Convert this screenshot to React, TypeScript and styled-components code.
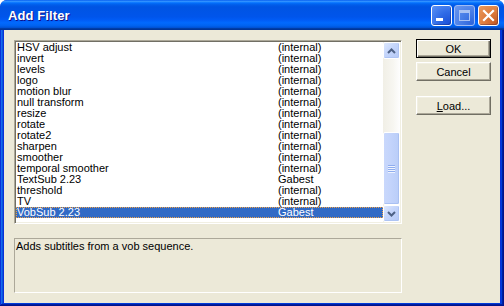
import { createGlobalStyle, styled } from "styled-components"

const GlobalStyle = createGlobalStyle`
  html, body {
    margin: 0;
    padding: 0;
    background: #ffffff;
    overflow: hidden;
  }
  body {
    width: 504px;
    height: 306px;
    font-family: "Liberation Sans", Arial, sans-serif;
  }
`

const Window = styled.div`
  width: 504px;
  height: 306px;
  display: flex;
  flex-direction: column;
  border-radius: 7px 7px 0 0;
  overflow: hidden;
  background: #0831d9;
`

const TitleBar = styled.div`
  height: 30px;
  flex: none;
  display: flex;
  align-items: flex-start;
  justify-content: space-between;
  padding: 0 5px 0 8px;
  box-sizing: border-box;
  background: linear-gradient(
    to bottom,
    #0058ee 0%,
    #3593ff 4%,
    #288eff 6%,
    #127dff 8%,
    #036ffc 10%,
    #0262ee 14%,
    #0057e5 20%,
    #0054e3 24%,
    #0055eb 56%,
    #005bf5 66%,
    #026afe 76%,
    #0062ef 86%,
    #0052d6 92%,
    #0040ab 94%,
    #003092 100%
  );
`

const Title = styled.span`
  margin-top: 8px;
  color: #ffffff;
  font-family: "Liberation Sans", Arial, sans-serif;
  font-weight: bold;
  font-size: 13px;
  line-height: 16px;
  text-shadow: 1px 1px #0f1089;
  letter-spacing: 0.1px;
`

const Controls = styled.div`
  display: flex;
  gap: 2px;
  padding-top: 5px;
`

const CtrlButton = styled.div<{ $kind: "min" | "max" | "close" }>`
  width: 21px;
  height: 21px;
  box-sizing: border-box;
  border-radius: 3px;
  border: 1px solid ${({ $kind }) => ($kind === "max" ? "#9fbcf5" : "#ffffff")};
  margin-left: ${({ $kind }) => ($kind === "close" ? "1px" : "0")};
  display: flex;
  background: ${({ $kind }) =>
    $kind === "close"
      ? "radial-gradient(circle at 90% 90%, #c45a24 0%, #dc7a3c 45%, #eb9a5c 100%)"
      : $kind === "max"
        ? "radial-gradient(circle at 90% 90%, #2f66dc 0%, #4a7fe8 50%, #6d98ee 100%)"
        : "radial-gradient(circle at 90% 90%, #1d52d8 0%, #2f6ae6 45%, #5b92f6 100%)"};
  box-shadow: ${({ $kind }) => ($kind === "max" ? "none" : "inset -1px -1px rgba(0, 0, 60, 0.25)")};

  svg {
    display: block;
  }
`

const ClientFrame = styled.div`
  flex: 1;
  display: flex;
  padding: 0 4px 3px 4px;
  background: #0831d9;
  box-shadow:
    inset -1px -1px #00138c,
    inset 1px 0 #0831d9,
    inset -2px -2px #001ea0,
    inset 2px 0 #166aee,
    inset -3px -3px #003bda,
    inset 3px 0 #0855dd;
`

const Client = styled.div`
  flex: 1;
  display: flex;
  gap: 14px;
  padding: 9px 9px 10px 10px;
  background: #ece9d8;
`

const MainColumn = styled.div`
  width: 388px;
  display: flex;
  flex-direction: column;
  gap: 14px;
  padding-top: 1px;
`

const ListBox = styled.div`
  height: 184px;
  box-sizing: border-box;
  display: flex;
  background: #ffffff;
  border: 1px solid;
  border-color: #aca899 #ffffff #ffffff #aca899;
  padding: 1px;
  box-shadow:
    inset 1px 1px #716f64,
    inset -1px -1px #f1efe2;
`

const Rows = styled.div`
  flex: 1;
  display: flex;
  flex-direction: column;
`

const Row = styled.div<{ $selected?: boolean }>`
  height: 11px;
  display: grid;
  grid-template-columns: 261px 1fr;
  padding-left: 1px;
  font-size: 11px;
  line-height: 11px;
  white-space: nowrap;
  color: ${({ $selected }) => ($selected ? "#ffffff" : "#000000")};
  background: ${({ $selected }) => ($selected ? "#316ac5" : "transparent")};
  outline: ${({ $selected }) => ($selected ? "1px dotted #f0a248" : "none")};
  outline-offset: -1px;
`

const ScrollBar = styled.div`
  width: 17px;
  display: flex;
  flex-direction: column;
  background: linear-gradient(to right, #f1efe6 0%, #f7f6f1 60%, #fefefe 100%);
`

const ScrollButton = styled.div`
  height: 17px;
  box-sizing: border-box;
  border: 1px solid #ffffff;
  border-radius: 2px;
  background: linear-gradient(135deg, #dde8fd 0%, #c4d5fb 45%, #b5c9f6 100%);
  box-shadow: inset -1px -1px #aec4f4;
  display: flex;
  align-items: center;
  justify-content: center;
`

const Track = styled.div`
  flex: 1;
`

const Thumb = styled.div`
  height: 73px;
  box-sizing: border-box;
  border: 1px solid #ffffff;
  border-radius: 2px;
  background: linear-gradient(to right, #c9d8fc 0%, #c2d3fb 50%, #b9cdf8 100%);
  box-shadow: inset -1px -1px #a9c0f2;
  display: flex;
  flex-direction: column;
  align-items: center;
  justify-content: center;
  gap: 1px;
`

const Grip = styled.div`
  width: 7px;
  height: 1px;
  background: #8fadef;
  box-shadow: 0 1px #eef3fe;
`

const Description = styled.div`
  height: 55px;
  box-sizing: border-box;
  border: 1px solid;
  border-color: #aca899 #ffffff #ffffff #aca899;
  padding: 1px 1px;
  font-size: 11px;
  line-height: 13px;
  color: #000000;
`

const ButtonColumn = styled.div`
  width: 75px;
  display: flex;
  flex-direction: column;
`

const Button = styled.div<{ $default?: boolean; $space?: number }>`
  height: 19px;
  box-sizing: border-box;
  margin-top: ${({ $space }) => $space ?? 0}px;
  display: flex;
  align-items: center;
  justify-content: center;
  font-size: 11px;
  color: #000000;
  background: #ece9d8;
  border: 1px solid;
  border-color: ${({ $default }) => ($default ? "#000000" : "#ffffff #716f64 #716f64 #ffffff")};
  box-shadow: ${({ $default }) =>
    $default
      ? "inset 1px 1px #ffffff, inset -1px -1px #716f64, inset -2px -2px #aca899"
      : "inset -1px -1px #aca899, inset 1px 1px #f1efe2"};
`

const filters: [string, string][] = [
  ["HSV adjust", "(internal)"],
  ["invert", "(internal)"],
  ["levels", "(internal)"],
  ["logo", "(internal)"],
  ["motion blur", "(internal)"],
  ["null transform", "(internal)"],
  ["resize", "(internal)"],
  ["rotate", "(internal)"],
  ["rotate2", "(internal)"],
  ["sharpen", "(internal)"],
  ["smoother", "(internal)"],
  ["temporal smoother", "(internal)"],
  ["TextSub 2.23", "Gabest"],
  ["threshold", "(internal)"],
  ["TV", "(internal)"],
  ["VobSub 2.23", "Gabest"],
]

const selected = 15

function Chevron({ up }: { up?: boolean }) {
  return (
    <svg width="9" height="6" viewBox="0 0 9 6">
      <polyline
        points={up ? "1,5 4.5,1.5 8,5" : "1,1 4.5,4.5 8,1"}
        fill="none"
        stroke="#4d6185"
        strokeWidth="2"
      />
    </svg>
  )
}

export default function App() {
  return (
    <>
      <GlobalStyle />
      <Window>
        <TitleBar>
          <Title>Add Filter</Title>
          <Controls>
            <CtrlButton $kind="min">
              <svg width="19" height="19" viewBox="0 0 19 19">
                <rect x="4" y="12" width="7" height="3" fill="#ffffff" />
              </svg>
            </CtrlButton>
            <CtrlButton $kind="max">
              <svg width="19" height="19" viewBox="0 0 19 19">
                <rect x="4.5" y="4.5" width="10" height="10" fill="none" stroke="#a9c2f3" strokeWidth="1" />
                <rect x="4" y="4" width="11" height="3" fill="#a9c2f3" />
              </svg>
            </CtrlButton>
            <CtrlButton $kind="close">
              <svg width="19" height="19" viewBox="0 0 19 19">
                <path d="M5 5 L14 14 M14 5 L5 14" stroke="#ffffff" strokeWidth="2.2" strokeLinecap="square" />
              </svg>
            </CtrlButton>
          </Controls>
        </TitleBar>
        <ClientFrame>
          <Client>
            <MainColumn>
              <ListBox>
                <Rows>
                  {filters.map(([name, author], i) => (
                    <Row key={name} $selected={i === selected}>
                      <span>{name}</span>
                      <span>{author}</span>
                    </Row>
                  ))}
                </Rows>
                <ScrollBar>
                  <ScrollButton>
                    <Chevron up />
                  </ScrollButton>
                  <Track />
                  <Thumb>
                    <Grip />
                    <Grip />
                    <Grip />
                    <Grip />
                  </Thumb>
                  <ScrollButton>
                    <Chevron />
                  </ScrollButton>
                </ScrollBar>
              </ListBox>
              <Description>Adds subtitles from a vob sequence.</Description>
            </MainColumn>
            <ButtonColumn>
              <Button $default>OK</Button>
              <Button $space={4}>Cancel</Button>
              <Button $space={15}>
                <span>
                  <u>L</u>oad...
                </span>
              </Button>
            </ButtonColumn>
          </Client>
        </ClientFrame>
      </Window>
    </>
  )
}
